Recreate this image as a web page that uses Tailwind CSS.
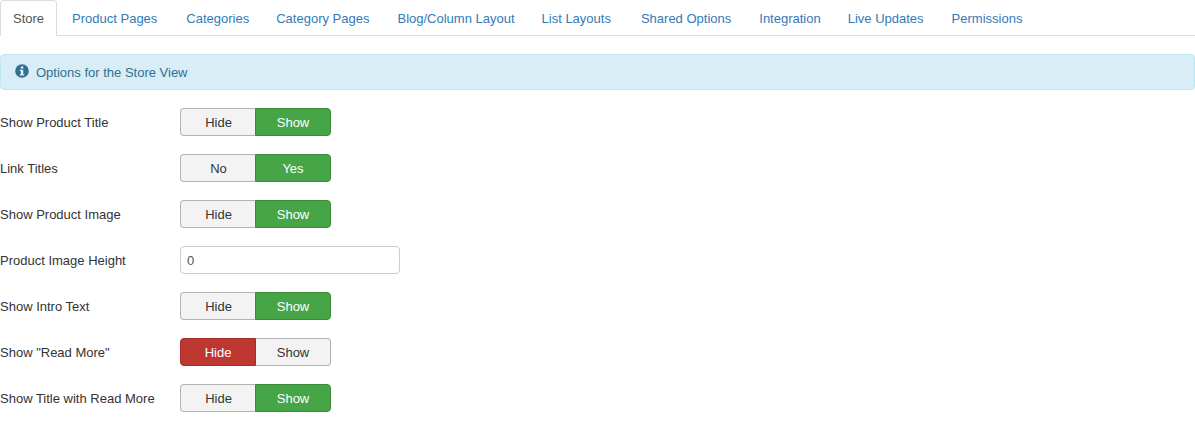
<!DOCTYPE html>
<html lang="en">
<head>
  <meta charset="UTF-8" />
  <title>Store Options</title>
  <script src="https://cdn.jsdelivr.net/npm/@tailwindcss/browser@4"></script>
</head>
<body class="bg-white text-[13px] leading-[18px] text-[#333] font-['Liberation_Sans',Arial,sans-serif]">
  <ul class="flex h-[36px] border-b border-[#ddd]">
    <li class="h-[36px] mr-[2px] px-[12px] pt-[9px] bg-white border border-[#ddd] border-b-0 rounded-t-[4px] text-[#555]">Store</li>
    <li class="mr-[3px] px-[13px] pt-[10px] text-[#337ab7]">Product Pages</li>
    <li class="mr-[1px] px-[13px] pt-[10px] text-[#337ab7]">Categories</li>
    <li class="mr-[2px] px-[13px] pt-[10px] text-[#337ab7]">Category Pages</li>
    <li class="mr-[1px] px-[13px] pt-[10px] text-[#337ab7]">Blog/Column Layout</li>
    <li class="mr-[4px] px-[13px] pt-[10px] text-[#337ab7]">List Layouts</li>
    <li class="mr-[2px] px-[13px] pt-[10px] text-[#337ab7]">Shared Options</li>
    <li class="mr-[1px] px-[13px] pt-[10px] text-[#337ab7]">Integration</li>
    <li class="mr-[2px] px-[13px] pt-[10px] text-[#337ab7]">Live Updates</li>
    <li class="mr-[2px] px-[13px] pt-[10px] text-[#337ab7]">Permissions</li>
  </ul>

  <div class="mt-[18px] h-[36px] flex items-center pl-[14px] bg-[#d9edf7] border border-[#bce8f1] rounded-[4px] text-[#31708f]">
    <svg class="w-[14px] h-[14px] mr-[7px] mb-[2px]" viewBox="0 0 14 14">
      <circle cx="7" cy="7" r="6.8" fill="#31708f" />
      <rect x="5.8" y="2.4" width="2.5" height="2.2" fill="#d9edf7" />
      <path d="M4.8 5.7h3.5v4.6h1v1.3H4.8v-1.3h1V7H4.800z" fill="#d9edf7" />
    </svg>
    <span class="mt-[1px]">Options for the Store View</span>
  </div>

  <div class="mt-[18px] flex flex-col gap-[18px]">
    <div class="flex items-center h-[28px]">
      <label class="w-[180px] mt-[2px]">Show Product Title</label>
      <div class="flex w-[151px] h-[28px] text-center leading-[28px]">
        <span class="w-[75px] pl-[1px] bg-[#f3f3f3] border border-[#b3b3b3] border-r-0 rounded-l-[4px]">Hide</span>
        <span class="w-[76px] bg-[#46a546] border border-[#3a8a3a] rounded-r-[4px] text-white">Show</span>
      </div>
    </div>
    <div class="flex items-center h-[28px]">
      <label class="w-[180px] mt-[2px]">Link Titles</label>
      <div class="flex w-[151px] h-[28px] text-center leading-[28px]">
        <span class="w-[75px] pl-[1px] bg-[#f3f3f3] border border-[#b3b3b3] border-r-0 rounded-l-[4px]">No</span>
        <span class="w-[76px] bg-[#46a546] border border-[#3a8a3a] rounded-r-[4px] text-white">Yes</span>
      </div>
    </div>
    <div class="flex items-center h-[28px]">
      <label class="w-[180px] mt-[2px]">Show Product Image</label>
      <div class="flex w-[151px] h-[28px] text-center leading-[28px]">
        <span class="w-[75px] pl-[1px] bg-[#f3f3f3] border border-[#b3b3b3] border-r-0 rounded-l-[4px]">Hide</span>
        <span class="w-[76px] bg-[#46a546] border border-[#3a8a3a] rounded-r-[4px] text-white">Show</span>
      </div>
    </div>
    <div class="flex items-center h-[28px]">
      <label class="w-[180px] mt-[2px]">Product Image Height</label>
      <input type="text" value="0" class="w-[220px] h-[28px] px-[6px] pt-[1px] bg-white border border-[#ccc] rounded-[4px] text-[#555]" />
    </div>
    <div class="flex items-center h-[28px]">
      <label class="w-[180px] mt-[2px]">Show Intro Text</label>
      <div class="flex w-[151px] h-[28px] text-center leading-[28px]">
        <span class="w-[75px] pl-[1px] bg-[#f3f3f3] border border-[#b3b3b3] border-r-0 rounded-l-[4px]">Hide</span>
        <span class="w-[76px] bg-[#46a546] border border-[#3a8a3a] rounded-r-[4px] text-white">Show</span>
      </div>
    </div>
    <div class="flex items-center h-[28px]">
      <label class="w-[180px] mt-[2px]">Show "Read More"</label>
      <div class="flex w-[151px] h-[28px] text-center leading-[28px]">
        <span class="w-[76px] bg-[#bd362f] border border-[#a32e28] rounded-l-[4px] text-white">Hide</span>
        <span class="w-[75px] bg-[#f3f3f3] border border-[#b3b3b3] border-l-0 rounded-r-[4px]">Show</span>
      </div>
    </div>
    <div class="flex items-center h-[28px]">
      <label class="w-[180px] mt-[2px]">Show Title with Read More</label>
      <div class="flex w-[151px] h-[28px] text-center leading-[28px]">
        <span class="w-[75px] pl-[1px] bg-[#f3f3f3] border border-[#b3b3b3] border-r-0 rounded-l-[4px]">Hide</span>
        <span class="w-[76px] bg-[#46a546] border border-[#3a8a3a] rounded-r-[4px] text-white">Show</span>
      </div>
    </div>
  </div>
</body>
</html>
